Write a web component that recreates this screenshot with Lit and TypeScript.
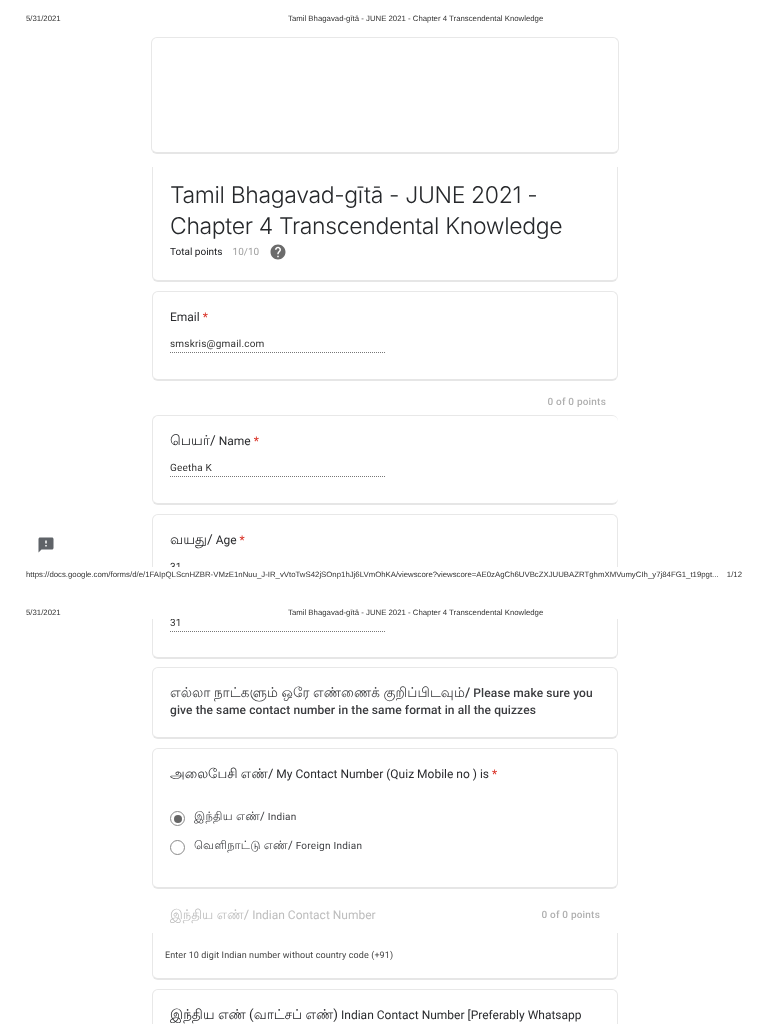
import { LitElement, html, css } from "lit";
import { customElement } from "lit/decorators.js";

const feedback = html`<svg viewBox="0 0 24 24" width="18" height="18"><path fill="#5f6368" d="M20 2H4c-1.1 0-2 .9-2 2v18l4-4h14c1.1 0 2-.9 2-2V4c0-1.1-.9-2-2-2zm-7 12h-2v-2h2v2zm0-4h-2V6h2v4z"/></svg>`;
const help = html`<svg viewBox="0 0 24 24" width="18" height="18"><path fill="#6b6b6b" d="M12 2C6.48 2 2 6.48 2 12s4.48 10 10 10 10-4.48 10-10S17.52 2 12 2zm1 17h-2v-2h2v2zm2.07-7.75l-.9.92C13.45 12.9 13 13.5 13 15h-2v-.5c0-1.1.45-2.1 1.17-2.83l1.24-1.26c.37-.36.59-.86.59-1.41 0-1.1-.9-2-2-2s-2 .9-2 2H8c0-2.21 1.79-4 4-4s4 1.79 4 4c0 .88-.36 1.68-.93 2.25z"/></svg>`;

@customElement("app-root")
export class AppRoot extends LitElement {
  static styles = css`
    :host { display: block; position: relative; width: 768px; height: 1024px; overflow: hidden; background: #fff; color: #202124; font-family: Roboto, "Noto Sans", "Noto Sans CJK SC", sans-serif; filter: blur(0.4px); text-rendering: geometricPrecision; }
    .ta { font-size: 1.15em; line-height: 0; }
    .ta-md { font-size: 1.13em; line-height: 0; }
    .ta-sm { font-size: 1.1em; line-height: 0; }
    .head { display: flex; align-items: center; height: 12px; padding-left: 26px; font: 7.8px/12px "Liberation Sans", sans-serif; color: #333; }
    .head .date { width: 262px; }
    .head-1 { margin-top: 13px; }
    .head-2 { margin-top: 26px; }
    .clip { overflow: hidden; }
    .clip-1 { height: 530px; margin-top: 12px; }
    .clip-2 { height: 405px; }
    .form { display: flex; flex-direction: column; width: 466px; margin-left: 152px; }
    .card { box-sizing: border-box; background: #fff; border: 1px solid #e8e8e8; border-bottom: 2px solid #e6e6e6; border-radius: 6px; padding: 0 17px; flex: none; }
    .banner { height: 117px; margin-left: -1px; width: 468px; }
    .titlecard { height: 115px; margin-top: 13px; border-top: none; border-radius: 0 0 6px 6px; padding-top: 13px; }
    h1 { margin: 0; font: 300 23px/31px Inter, sans-serif; letter-spacing: -0.35px; color: #26282b; }
    .total { display: flex; align-items: center; margin-top: 1px; font-size: 10px; height: 18px; }
    .total .score { margin-left: 10px; color: #a0a0a0; }
    .total svg { margin-left: 10px; }
    .q { height: 90px; padding-top: 17px; }
    .email { margin-top: 9px; }
    .label { font-size: 12px; line-height: 16px; color: #2a2b2e; }
    .req { color: #d93025; }
    .value { width: 215px; margin-top: 13px; font-size: 10px; line-height: 13px; color: #333; border-bottom: 1px dotted #777; padding-bottom: 1px; letter-spacing: 0.2px; }
    .points { flex: none; height: 34px; display: flex; align-items: center; justify-content: flex-end; padding: 8px 12px 0 0; box-sizing: border-box; font-size: 10px; font-weight: 500; color: #b0b0b0; letter-spacing: 0.2px; }
    .noright { border-right: none; }
    .gap { margin-top: 9px; }
    .age-rest { height: 40px; border-top: none; border-radius: 0 0 6px 6px; padding-top: 0; }
    .age-rest .value { margin-top: -2px; }
    .notice { height: 72px; margin-top: 8px; padding-top: 17px; font-size: 12px; font-weight: 500; line-height: 17px; color: #3a3b3e; letter-spacing: 0.1px; }
    .contact { height: 141px; margin-top: 9px; padding-top: 17px; }
    .options { display: flex; flex-direction: column; gap: 12px; margin-top: 28px; }
    .opt { display: flex; align-items: center; gap: 9px; font-size: 10px; line-height: 15px; color: #3c3d40; letter-spacing: 0.25px; }
    .opt .t { margin-bottom: 2px; }
    .radio { box-sizing: border-box; width: 15px; height: 15px; border-radius: 50%; border: 1.5px solid #8a8a8a; display: flex; align-items: center; justify-content: center; flex: none; }
    .radio i { display: block; width: 8px; height: 8px; border-radius: 50%; background: #666; }
    .section { flex: none; height: 44px; display: flex; align-items: center; justify-content: space-between; padding: 8px 18px 0 18px; box-sizing: border-box; font-size: 12px; color: #bdbdbd; }
    .section .pts { font-size: 10px; font-weight: 500; color: #b0b0b0; letter-spacing: 0.2px; }
    .hint { height: 47px; border-top: none; border-radius: 0 0 6px 6px; padding: 17px 0 0 12px; font-size: 9px; line-height: 12px; color: #444; letter-spacing: 0.1px; }
    .last { margin-top: 9px; height: 60px; padding-top: 17px; font-size: 12px; line-height: 16px; color: #2a2b2e; white-space: nowrap; }
    .foot { display: flex; justify-content: space-between; height: 12px; margin-top: 2px; padding: 0 26px; font: 7.8px/12px "Liberation Sans", sans-serif; color: #333; white-space: nowrap; }
    .fab { position: absolute; left: 37px; top: 536px; }
  `;

  render() {
    return html`
      <div class="head head-1"><span class="date">5/31/2021</span><span>Tamil Bhagavad-gītā - JUNE 2021 - Chapter 4 Transcendental Knowledge</span></div>
      <div class="clip clip-1">
        <div class="form">
          <div class="card banner"></div>
          <div class="card titlecard">
            <h1>Tamil Bhagavad-gītā - JUNE 2021 - Chapter 4 Transcendental Knowledge</h1>
            <div class="total"><span>Total points</span><span class="score">10/10</span>${help}</div>
          </div>
          <div class="card q email">
            <div class="label">Email <span class="req">*</span></div>
            <div class="value">smskris@gmail.com</div>
          </div>
          <div class="points">0 of 0 points</div>
          <div class="card q noright">
            <div class="label"><span class="ta">பெயர்/</span> Name <span class="req">*</span></div>
            <div class="value">Geetha K</div>
          </div>
          <div class="card q gap">
            <div class="label"><span class="ta">வயது/</span> Age <span class="req">*</span></div>
            <div class="value">31</div>
          </div>
        </div>
      </div>
      <div class="foot"><span>https://docs.google.com/forms/d/e/1FAIpQLScnHZBR-VMzE1nNuu_J-IR_vVtoTwS42jSOnp1hJj6LVmOhKA/viewscore?viewscore=AE0zAgCh6UVBcZXJUUBAZRTghmXMVumyCIh_y7j84FG1_t19pgt...</span><span>1/12</span></div>
      <div class="head head-2"><span class="date">5/31/2021</span><span>Tamil Bhagavad-gītā - JUNE 2021 - Chapter 4 Transcendental Knowledge</span></div>
      <div class="clip clip-2">
        <div class="form">
          <div class="card age-rest"><div class="value">31</div></div>
          <div class="card notice"><span class="ta-md">எல்லா நாட்களும் ஒரே எண்ணைக் குறிப்பிடவும்/</span> Please make sure you give the same contact number in the same format in all the quizzes</div>
          <div class="card contact">
            <div class="label"><span class="ta-sm">அலைபேசி எண்/</span> My Contact Number (Quiz Mobile no ) is <span class="req">*</span></div>
            <div class="options">
              <div class="opt"><span class="radio"><i></i></span><span class="t"><span class="ta">இந்திய எண்/</span> Indian</span></div>
              <div class="opt"><span class="radio"></span><span class="t"><span class="ta">வெளிநாட்டு எண்/</span> Foreign Indian</span></div>
            </div>
          </div>
          <div class="section"><span><span class="ta-sm">இந்திய எண்/</span> Indian Contact Number</span><span class="pts">0 of 0 points</span></div>
          <div class="card hint">Enter 10 digit Indian number without country code (+91)</div>
          <div class="card last"><span class="ta-md">இந்திய எண் (வாட்சப் எண்)</span> Indian Contact Number [Preferably Whatsapp</div>
        </div>
      </div>
      <div class="fab">${feedback}</div>
    `;
  }
}
